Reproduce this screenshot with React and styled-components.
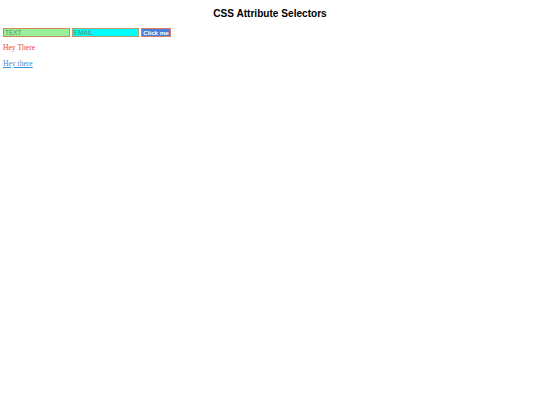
import React from 'react';
import styled, { createGlobalStyle } from 'styled-components';

const GlobalStyle = createGlobalStyle`
  body {
    margin: 0;
    padding: 0 3px;
    background: #fff;
    font-family: "Liberation Serif", serif;
  }
`;

const Title = styled.h1`
  margin: 0;
  padding-top: 8px;
  text-align: center;
  font-family: "Liberation Sans", Arial, sans-serif;
  font-size: 10.1px;
  font-weight: bold;
  color: #000;
`;

const Form = styled.form`
  display: flex;
  align-items: center;
  gap: 2px;
  margin-top: 9px;
`;

const Field = styled.input`
  box-sizing: border-box;
  width: 67px;
  height: 9px;
  padding: 0 1px;
  font-family: "Liberation Sans", Arial, sans-serif;
  font-size: 6.4px;
  border: 1px solid ${p => p.$border};
  background: ${p => p.$bg};
  outline: none;
  &::placeholder {
    color: #5f8a6a;
  }
`;

const Button = styled.button`
  box-sizing: border-box;
  height: 9px;
  width: 30px;
  padding: 0;
  font-family: "Liberation Sans", Arial, sans-serif;
  font-size: 6.2px;
  font-weight: bold;
  color: #fff;
  background: #4a7fd4;
  border: 1px solid #e07a6a;
`;

const Note = styled.p`
  margin: 6px 0 0;
  font-size: 7.6px;
  font-weight: normal;
  color: #e8423c;
`;

const Link = styled.a`
  display: inline-block;
  margin-top: 4px;
  font-size: 7.6px;
  color: #3a92d6;
  text-decoration: underline;
`;

export default function App() {
  return (
    <>
      <GlobalStyle />
      <Title>CSS Attribute Selectors</Title>
      <Form onSubmit={e => e.preventDefault()}>
        <Field type="text" placeholder="TEXT" $bg="#98f09a" $border="#d08a4e" />
        <Field type="email" placeholder="EMAIL" $bg="#00ffff" $border="#b89a6a" />
        <Button type="submit">Click me</Button>
      </Form>
      <Note>Hey There</Note>
      <Link href="#">Hey there</Link>
    </>
  );
}
